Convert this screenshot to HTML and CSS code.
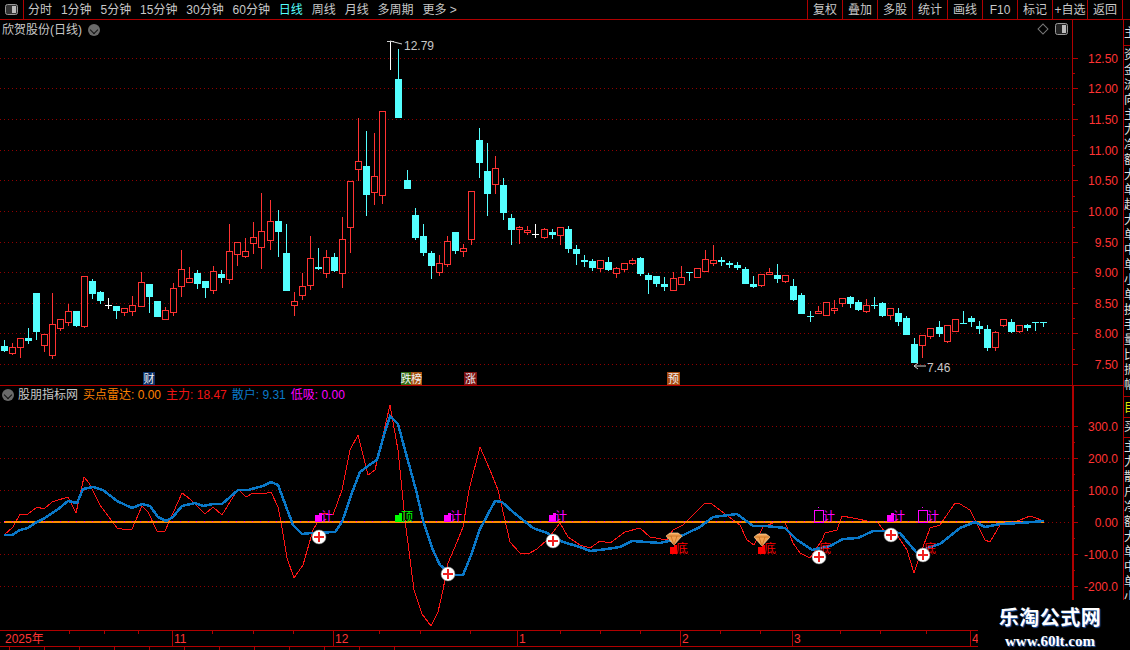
FILE: index.html
```html
<!DOCTYPE html>
<html lang="zh">
<head>
    <meta charset="UTF-8">
    <title>欣贺股份 日线</title>
    <link rel="stylesheet" href="styles.css">
</head>
<body>
    <!-- 顶部工具栏 -->
    <div class="toolbar">
        <div class="panel-toggle">
            <svg width="13" height="11" viewBox="0 0 13 11">
                <rect x="0.5" y="0.5" width="12" height="10" rx="2" fill="#333" stroke="#999"/>
                <rect x="7" y="2" width="4" height="7" fill="#bbb"/>
            </svg>
        </div>
        <div class="periods">
            <span>分时</span>
            <span>1分钟</span>
            <span>5分钟</span>
            <span>15分钟</span>
            <span>30分钟</span>
            <span>60分钟</span>
            <span class="active">日线</span>
            <span>周线</span>
            <span>月线</span>
            <span>多周期</span>
            <span>更多 &gt;</span>
        </div>
        <div class="actions">
            <span>复权</span>
            <span>叠加</span>
            <span>多股</span>
            <span>统计</span>
            <span>画线</span>
            <span>F10</span>
            <span>标记</span>
            <span>+自选</span>
            <span>返回</span>
        </div>
    </div>

    <div class="workspace">
        <div class="charts">
            <!-- K线 -->
            <div class="panel price-panel">
                <svg id="priceChart" class="chart" width="1123" height="365" viewBox="0 20 1123 365"></svg>
                <div class="panel-title">
                    <span class="name">欣贺股份(日线)</span>
                    <span class="fold"></span>
                </div>
                <div class="panel-tools">
                    <span class="diamond"></span>
                    <svg width="13" height="12" viewBox="0 0 13 12">
                        <rect x="0.5" y="0.5" width="12" height="11" rx="2" fill="#222" stroke="#999"/>
                        <rect x="7" y="2" width="4" height="8" fill="#bbb"/>
                    </svg>
                </div>
            </div>

            <!-- 副图指标 -->
            <div class="panel indicator-panel">
                <svg id="indicatorChart" class="chart" width="1123" height="244" viewBox="0 386 1123 244"></svg>
                <div class="panel-title indicator-title">
                    <span class="fold"></span>
                    <span class="name">股朋指标网</span>
                    <span class="buy">买点雷达: 0.00</span>
                    <span class="main">主力: 18.47</span>
                    <span class="retail">散户: 9.31</span>
                    <span class="low">低吸: 0.00</span>
                </div>
            </div>

            <!-- 时间轴 -->
            <div class="time-axis">
                <span class="year">2025年</span>
                <span class="nov">11</span>
                <span class="dec">12</span>
                <span class="jan">1</span>
                <span class="feb">2</span>
                <span class="mar">3</span>
                <span class="apr">4</span>
                <svg class="ticks" width="978" height="3">
                    <path d="M69.5 0v3M104.5 0v3M138.5 0v3M212.5 0v3M253.5 0v3M293.5 0v3M379.5 0v3M420.5 0v3M470.5 0v3M560.5 0v3M600.5 0v3M640.5 0v3M720.5 0v3M760.5 0v3M840.5 0v3M880.5 0v3M926.5 0v3"/>
                </svg>
            </div>
            <div class="date-strip">
                <span></span><span></span><span></span><span></span><span></span><span></span>
                <span></span><span></span><span></span><span></span><span></span><span></span>
            </div>
        </div>

        <!-- 右侧被截断的侧栏 -->
        <div class="side-strip">
            <div class="side-item first">主</div>
            <div class="side-item tall">资金流向主力净额大单超大单中单小单换手量比振幅</div>
            <div class="side-item yellow">目</div>
            <div class="side-item">买</div>
            <div class="side-item tall">主力散户净额大单中单小单换手量比振幅</div>
        </div>
    </div>

    <div class="watermark">
        <div class="wm-title">乐淘公式网</div>
        <div class="wm-url">www.60lt.com</div>
    </div>

    <script src="chart.js"></script>
</body>
</html>
```

FILE: styles.css
```css
* {
    box-sizing: border-box;
    margin: 0;
    padding: 0;
}

body {
    width: 1130px;
    height: 650px;
    overflow: hidden;
    position: relative;
    background-color: #000;
    color: #c8c8c8;
    font-family: "Liberation Sans", "Noto Sans CJK SC", sans-serif;
    font-size: 12px;
    line-height: 1;
}

.toolbar {
    display: flex;
    height: 20px;
    border-bottom: 1px solid #b00000;
}

.panel-toggle {
    width: 24px;
    border-right: 1px solid #b00000;
    display: flex;
    align-items: center;
    justify-content: center;
}

.periods {
    display: flex;
    align-items: center;
    gap: 8.9px;
    padding-left: 4px;
}

.periods .active {
    color: #54ffff;
}

.actions {
    display: flex;
    margin-left: auto;
    margin-right: 7px;
    border-right: 1px solid #b00000;
}

.actions span {
    width: 35px;
    border-left: 1px solid #b00000;
    display: flex;
    align-items: center;
    justify-content: center;
}

.workspace {
    display: flex;
    height: 630px;
}

.charts {
    width: 1123px;
}

.panel {
    position: relative;
}

.chart {
    display: block;
}

.price-panel {
    height: 366px;
    border-bottom: 1px solid #b00000;
}

.indicator-panel {
    height: 244px;
}

.panel-title {
    position: absolute;
    top: 3px;
    left: 2px;
    display: flex;
    align-items: center;
    gap: 6px;
    height: 13px;
}

.fold {
    width: 12px;
    height: 12px;
    border-radius: 50%;
    background-color: #6a6a6a;
    position: relative;
}

.fold::after {
    content: "";
    position: absolute;
    left: 3px;
    top: 3px;
    width: 5px;
    height: 5px;
    border-right: 1.5px solid #111;
    border-bottom: 1.5px solid #111;
    transform: rotate(45deg);
}

.indicator-title {
    top: 2px;
    gap: 5px;
}

.indicator-title .fold {
    margin-right: -1px;
}

.buy {
    color: #ff8000;
}

.main {
    color: #f01414;
}

.retail {
    color: #0a78c8;
}

.low {
    color: #ff00ff;
}

.panel-tools {
    position: absolute;
    top: 3px;
    left: 1039px;
    display: flex;
    align-items: center;
    gap: 8px;
}

.diamond {
    width: 8px;
    height: 8px;
    border: 1px solid #777;
    transform: rotate(45deg);
}

.time-axis {
    position: relative;
    display: flex;
    width: 978px;
    height: 17px;
    border-top: 1px solid #b00000;
    border-bottom: 1px solid #b00000;
    color: #ff3333;
}

.time-axis span {
    border-left: 1px solid #b00000;
    padding-left: 1px;
    display: flex;
    align-items: center;
}

.time-axis .year {
    width: 172px;
    border-left: none;
    padding-left: 5px;
}

.nov {
    width: 161px;
}

.dec {
    width: 184px;
}

.jan {
    width: 163px;
}

.feb {
    width: 112px;
}

.mar {
    width: 178px;
}

.apr {
    width: 8px;
}

.ticks {
    position: absolute;
    left: 0;
    top: 0;
}

.ticks path {
    stroke: #b00000;
    fill: none;
}

.date-strip {
    display: flex;
    height: 4px;
    gap: 34px;
    padding-left: 9px;
}

.date-strip span {
    width: 1px;
    background-color: #b00000;
}

.side-strip {
    width: 7px;
    height: 630px;
    overflow: hidden;
    border-left: 1px solid #b00000;
    color: #e0e0e0;
    font-family: "Noto Sans CJK SC", sans-serif;
}

.side-item {
    width: 6px;
    overflow: hidden;
    border-bottom: 1px solid #b00000;
    word-break: break-all;
    line-height: 15px;
    height: 20px;
}

.side-item.first {
    height: 26px;
    line-height: 24px;
}

.side-item.tall {
    height: 351px;
}

.side-item.yellow {
    color: #e6e600;
    height: 21px;
    line-height: 20px;
}

.watermark {
    position: absolute;
    left: 978px;
    top: 600px;
    width: 152px;
    height: 50px;
    padding-top: 5px;
    padding-right: 8px;
    background-color: #000;
    text-align: center;
    font-family: "Liberation Serif", "Noto Sans CJK SC", serif;
    font-weight: bold;
    color: #fff;
}

.wm-title {
    font-size: 20px;
    line-height: 27px;
    letter-spacing: 0.5px;
    text-shadow: 1px 1px 1px #2a5fb0;
}

.wm-url {
    font-size: 15px;
    line-height: 18px;
    text-shadow: 1px 1px 1px #2a5fb0;
}

/* svg 里的样式 */
.axis-line {
    stroke: #b00000;
    fill: none;
    shape-rendering: crispEdges;
}

.grid-line {
    stroke: #900000;
    stroke-dasharray: 1 3;
    shape-rendering: crispEdges;
}

.axis-label {
    fill: #ff3333;
    font-size: 12px;
    text-anchor: end;
}

.mark-label {
    fill: #c8c8c8;
    font-size: 12px;
}

.mark-line {
    stroke: #d0d0d0;
    fill: none;
}

.event-label {
    fill: #f0f0f0;
    font-size: 11px;
    text-anchor: middle;
}

.signal-label {
    font-size: 12px;
}

.candle,
.index-line {
    shape-rendering: crispEdges;
}
```

FILE: chart.js
```js
// K线数据（屏幕像素）: 最高, 实体上沿, 实体下沿, 最低, 颜色
const candles = [
    [340,346,351,352,'c'],[343,347,353,355,'r'],[338,338,347,358,'r'],[328,338,341,344,'c'],[293,293,332,340,'c'],
    [334,334,345,352,'r'],[293,324,355,359,'r'],[319,319,328,331,'r'],[304,311,322,326,'r'],[311,311,326,327,'c'],
    [276,276,326,328,'r'],[279,281,294,299,'c'],[291,292,301,304,'c'],[298,305,305,309,'w'],[306,306,311,319,'c'],
    [308,308,312,316,'r'],[296,305,311,316,'r'],[272,282,306,306,'r'],[284,284,297,313,'c'],[301,301,317,317,'c'],
    [307,310,319,320,'r'],[283,288,312,316,'r'],[250,269,286,297,'r'],[267,278,282,283,'r'],[270,273,284,289,'c'],
    [281,281,288,298,'c'],[266,271,290,294,'r'],[270,274,278,283,'c'],[224,251,279,284,'r'],[242,242,254,266,'r'],
    [238,251,256,258,'r'],[222,237,243,254,'r'],[193,231,247,269,'r'],[200,221,240,250,'r'],[210,221,232,257,'c'],
    [224,253,291,291,'c'],[292,301,305,316,'r'],[273,286,295,300,'r'],[236,258,285,290,'r'],[248,267,269,270,'c'],
    [250,257,273,278,'r'],[253,257,271,272,'c'],[217,239,273,288,'r'],[181,181,227,253,'r'],[118,161,169,181,'r'],
    [131,166,195,216,'c'],[133,176,192,205,'r'],[111,111,195,204,'r'],[41,41,41,70,'w'],[49,79,118,118,'c'],
    [170,180,189,189,'c'],[208,215,238,240,'c'],[224,236,253,256,'c'],[251,253,266,279,'c'],[255,263,272,276,'r'],
    [236,241,264,267,'r'],[232,232,251,254,'c'],[244,248,251,257,'r'],[191,191,239,245,'r'],[128,140,163,178,'c'],
    [143,171,194,216,'c'],[156,168,184,194,'r'],[178,185,213,220,'c'],[214,218,230,245,'c'],[226,227,229,244,'r'],
    [226,230,232,235,'r'],[224,234,234,238,'w'],[228,229,237,239,'r'],[229,232,235,239,'c'],[227,227,235,245,'r'],
    [226,229,249,253,'c'],[245,249,254,265,'c'],[255,260,262,267,'c'],[259,261,268,271,'c'],[260,260,268,272,'r'],
    [257,262,270,271,'c'],[267,268,273,278,'r'],[263,263,269,272,'r'],[258,260,263,265,'r'],[257,258,274,276,'c'],
    [273,275,280,294,'c'],[276,276,284,287,'c'],[277,284,287,291,'c'],[272,278,290,290,'r'],[266,277,284,284,'r'],
    [272,272,273,281,'c'],[268,268,277,277,'r'],[250,259,271,271,'r'],[245,260,263,266,'r'],[257,260,262,266,'c'],
    [261,263,265,268,'c'],[262,265,268,270,'c'],[267,269,284,284,'c'],[276,284,287,288,'c'],[274,274,285,287,'r'],
    [268,272,274,274,'r'],[264,275,279,283,'c'],[275,275,281,283,'r'],[279,286,300,301,'c'],[293,295,314,314,'c'],
    [311,316,316,322,'c'],[306,311,313,314,'r'],[302,302,315,315,'r'],[300,308,310,314,'r'],[298,298,303,307,'r'],
    [296,297,304,308,'c'],[300,302,310,311,'c'],[299,305,311,313,'r'],[297,305,305,309,'c'],[302,303,316,317,'c'],
    [308,308,315,320,'r'],[308,313,322,326,'c'],[316,318,335,335,'c'],[338,344,363,363,'c'],[335,335,345,358,'r'],
    [328,328,336,339,'r'],[321,327,334,337,'c'],[325,325,341,343,'r'],[319,319,331,331,'r'],[311,323,323,324,'c'],
    [316,318,322,327,'c'],[321,326,329,334,'c'],[325,329,348,351,'c'],[331,332,347,351,'r'],[319,319,325,327,'r'],
    [319,322,332,333,'c'],[325,325,331,333,'r'],[324,325,328,331,'c'],[322,322,322,331,'c'],[322,322,322,327,'c']
];

// 每隔十几根多一个像素
const stepAt = [17, 33, 50, 67, 83, 100, 116];

const colors = { c: '#54ffff', r: '#ff3232', w: '#ffffff' };

const blueLine = [
    [4,535],[12,535],[20,530],[28,528],[37,522],[43,519],[57,510],[68,501],[77,503],[83,489],[93,487],[103,490],
    [117,501],[132,508],[142,504],[150,506],[158,517],[166,521],[173,517],[182,506],[195,503],[203,506],[213,504],
    [222,504],[238,490],[248,490],[263,486],[271,482],[278,485],[290,517],[293,525],[302,534],[312,533],[335,532],
    [342,522],[353,490],[360,472],[368,466],[377,460],[384,435],[390,416],[398,424],[405,450],[416,490],[423,520],
    [432,548],[440,565],[453,575],[463,575],[472,553],[479,531],[495,501],[502,502],[513,512],[533,528],[547,533],
    [563,542],[580,547],[590,551],[600,550],[620,547],[632,541],[660,543],[673,540],[700,527],[713,517],[737,514],
    [753,526],[765,526],[785,528],[797,540],[812,550],[830,546],[843,539],[858,538],[873,531],[885,531],[900,533],
    [910,545],[917,553],[930,547],[940,544],[960,528],[975,522],[985,527],[1000,524],[1020,523],[1044,521]
];

const redLine = [
    [4,535],[13,527],[20,514],[28,514],[37,507],[44,509],[52,502],[68,497],[76,513],[84,477],[89,483],[100,505],
    [117,528],[122,529],[132,529],[142,506],[148,512],[157,531],[165,531],[182,493],[190,499],[205,514],[213,507],
    [222,515],[238,489],[246,497],[253,493],[263,494],[271,492],[278,507],[281,522],[287,558],[294,578],[303,565],
    [313,530],[323,513],[333,515],[342,490],[350,450],[358,435],[368,475],[375,470],[390,405],[398,450],[405,520],
    [414,590],[422,614],[431,626],[438,612],[443,590],[448,563],[457,542],[463,527],[469,490],[480,447],[490,470],
    [498,490],[510,542],[520,553],[528,554],[537,549],[547,540],[560,523],[568,537],[580,545],[590,548],[600,541],
    [610,543],[625,532],[640,528],[650,537],[667,540],[673,530],[683,525],[705,503],[712,504],[740,525],[747,540],
    [754,545],[763,527],[773,523],[785,522],[793,543],[800,553],[810,558],[822,540],[825,533],[837,530],[842,516],
    [853,518],[872,522],[878,523],[885,532],[897,535],[907,550],[914,573],[923,547],[930,528],[940,525],[955,503],
    [960,504],[970,510],[985,540],[990,542],[1000,525],[1015,522],[1030,516],[1044,521]
];

function candleX(i) {
    return 4 + 8 * i + stepAt.filter(n => n <= i).length;
}

function drawCandles() {
    let out = '';
    candles.forEach((d, i) => {
        const x = candleX(i);
        const color = colors[d[4]];
        out += `<rect x="${x}" y="${d[0]}" width="1" height="${d[3] - d[0]}" fill="${color}"/>`;
        if (d[4] === 'r') {
            out += `<rect x="${x - 2.5}" y="${d[1] + 0.5}" width="6" height="${d[2] - d[1]}" fill="#000" stroke="${color}"/>`;
        } else if (d[1] === d[2]) {
            out += `<rect x="${x - 3}" y="${d[1]}" width="7" height="1" fill="${color}"/>`;
        } else {
            out += `<rect x="${x - 3}" y="${d[1]}" width="7" height="${d[2] - d[1]}" fill="${color}"/>`;
        }
    });
    return `<g class="candle">${out}</g>`;
}

function gridAndAxis(rows, top, bottom, axisWidth) {
    let out = '';
    rows.forEach(r => {
        out += `<line class="grid-line" x1="0" y1="${r.y + 0.5}" x2="1072" y2="${r.y + 0.5}"/>`;
        out += `<line class="axis-line" x1="1072" y1="${r.y + 0.5}" x2="1078" y2="${r.y + 0.5}"/>`;
        out += `<text class="axis-label" x="1118" y="${r.y + 5}">${r.label}</text>`;
    });
    // 两个刻度之间的小刻度
    for (let i = 0; i < rows.length - 1; i++) {
        const mid = Math.round((rows[i].y + rows[i + 1].y) / 2) + 0.5;
        out += `<line class="axis-line" x1="1072" y1="${mid}" x2="1075" y2="${mid}"/>`;
    }
    out += `<line class="axis-line" x1="1072.5" y1="${top}" x2="1072.5" y2="${bottom}" stroke-width="${axisWidth}"/>`;
    return out;
}

function eventTag(x, w, bg, text) {
    return `<rect x="${x}" y="372" width="${w}" height="13" fill="${bg}"/>` +
        `<text class="event-label" x="${x + w / 2}" y="383">${text}</text>`;
}

function drawPrice() {
    const rows = [
        [58, '12.50'], [88, '12.00'], [119, '11.50'], [150, '11.00'], [180, '10.50'], [211, '10.00'],
        [242, '9.50'], [272, '9.00'], [303, '8.50'], [333, '8.00'], [364, '7.50']
    ].map(r => ({ y: r[0], label: r[1] }));

    let out = gridAndAxis(rows, 20, 385, 1);
    out += drawCandles();

    // 最高最低价标注
    out += '<path class="mark-line" d="M387 41.5h6M390 41l12 3"/>';
    out += '<text class="mark-label" x="404" y="50">12.79</text>';
    out += '<path class="mark-line" d="M914 366h12M914 366l4 -3M914 366l4 3"/>';
    out += '<text class="mark-label" x="927" y="372">7.46</text>';

    // 事件标签
    out += eventTag(143, 12, '#0a2f66', '财');
    out += eventTag(401, 10, '#2f6a12', '跌');
    out += eventTag(411, 11, '#a85010', '榜');
    out += eventTag(464, 13, '#7a1010', '涨');
    out += eventTag(667, 13, '#a84a10', '预');

    document.getElementById('priceChart').innerHTML = out;
}

function plusMark(x, y) {
    return `<circle cx="${x}" cy="${y}" r="7" fill="#fff" stroke="#777" stroke-width="0.5"/>` +
        `<path d="M${x - 5} ${y}h10M${x} ${y - 5}v10" stroke="#f02020" stroke-width="2"/>`;
}

function solidSignal(x, y, color, text) {
    return `<rect x="${x}" y="${y}" width="7" height="7" fill="${color}"/>` +
        `<rect x="${x + 4}" y="${y - 2}" width="3" height="2" fill="${color}"/>` +
        `<text class="signal-label" x="${x + 6}" y="${y + 6}" fill="${color}">${text}</text>`;
}

function hollowSignal(x) {
    return `<rect x="${x + 0.5}" y="510.5" width="9" height="12" fill="none" stroke="#ff00ff"/>` +
        `<rect x="${x + 4}" y="507" width="1" height="1" fill="#ff00ff"/>` +
        `<text class="signal-label" x="${x + 9}" y="521" fill="#ff00ff">计</text>`;
}

function gem(x, y) {
    return `<polygon points="${x - 8},${y - 3} ${x - 4},${y - 6} ${x + 4},${y - 6} ${x + 8},${y - 3} ${x},${y + 6}" fill="#f0a050" stroke="#ffe0b0" stroke-width="0.7"/>` +
        `<path d="M${x - 8} ${y - 3}h16M${x} ${y + 6}l-3 -9M${x} ${y + 6}l3 -9" stroke="#b86010" stroke-width="0.6" fill="none"/>`;
}

function drawIndicator() {
    const rows = [
        [426, '300.0'], [458, '200.0'], [490, '100.0'], [522, '0.00'], [554, '-100.0'], [586, '-200.0']
    ].map(r => ({ y: r[0], label: r[1] }));

    let out = gridAndAxis(rows, 386, 630, 2);

    out += `<polyline class="index-line" points="${redLine.join(' ')}" fill="none" stroke="#ff1414" stroke-width="1"/>`;
    out += '<line class="index-line" x1="4" y1="522" x2="1044" y2="522" stroke="#ff8c00" stroke-width="2"/>';
    out += '<line class="index-line" x1="4" y1="521.5" x2="1044" y2="521.5" stroke="#ff00ff" stroke-width="1" stroke-dasharray="1 7"/>';
    out += `<polyline class="index-line" points="${blueLine.join(' ')}" fill="none" stroke="#0a78c8" stroke-width="2.5"/>`;

    // 信号
    out += solidSignal(315, 515, '#ff00ff', '计');
    out += solidSignal(395, 515, '#00ff00', '顶');
    out += solidSignal(444, 515, '#ff00ff', '计');
    out += solidSignal(549, 515, '#ff00ff', '计');
    out += solidSignal(887, 515, '#ff00ff', '计');
    out += hollowSignal(814);
    out += hollowSignal(918);

    out += solidSignal(670, 547, '#ff0000', '底');
    out += solidSignal(758, 547, '#ff0000', '底');
    out += '<text class="signal-label" x="819" y="553" fill="#ff0000">底</text>';
    out += '<text class="signal-label" x="924" y="553" fill="#ff0000">底</text>';
    out += gem(674, 539);
    out += gem(762, 540);

    [[319, 537], [448, 574], [553, 541], [819, 557], [891, 535], [923, 555]].forEach(p => {
        out += plusMark(p[0], p[1]);
    });

    document.getElementById('indicatorChart').innerHTML = out;
}

drawPrice();
drawIndicator();
```
